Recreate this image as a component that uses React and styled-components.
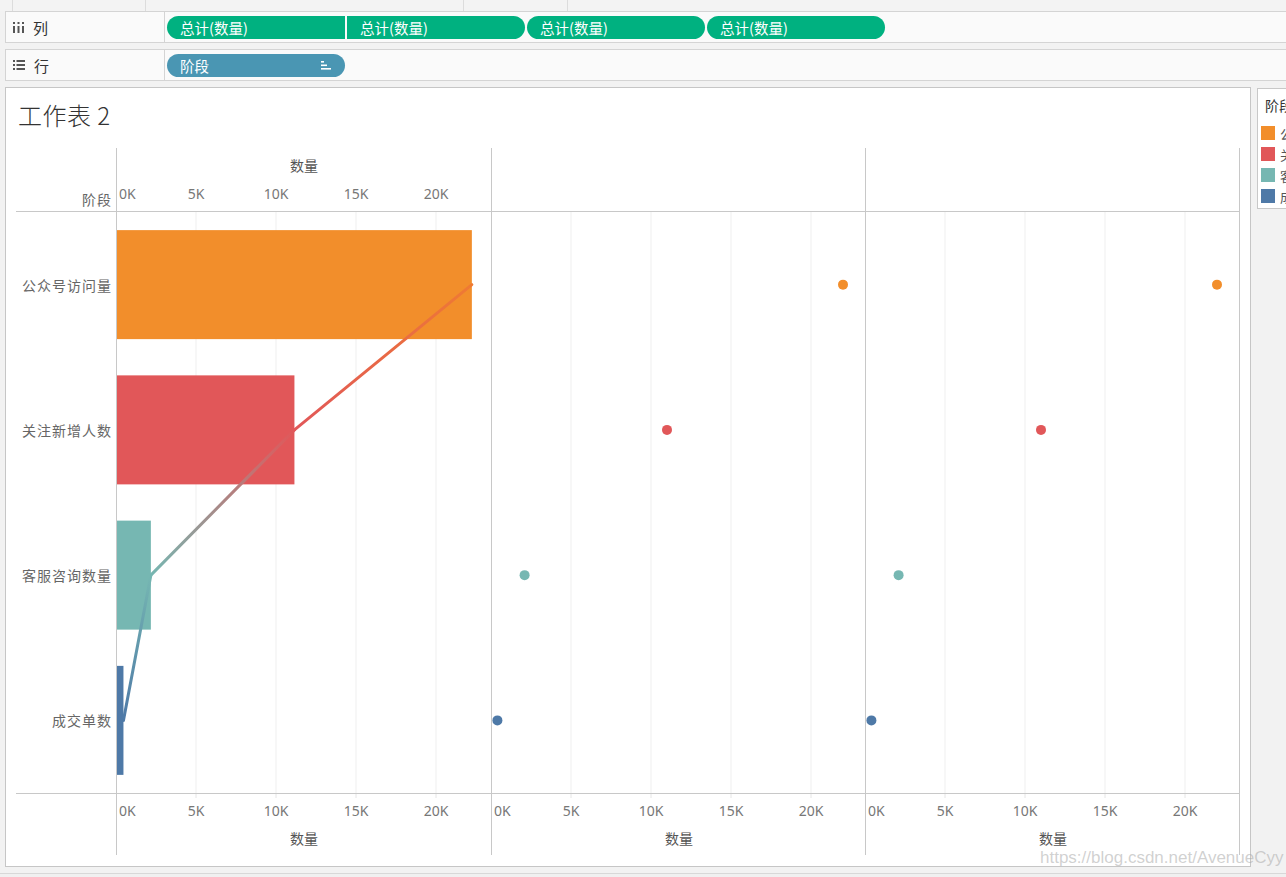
import React from "react";
import styled, { createGlobalStyle } from "styled-components";

const stages = [
  { name: "公众号访问量", value: 22000, color: "#f28e2b" },
  { name: "关注新增人数", value: 11000, color: "#e15759" },
  { name: "客服咨询数量", value: 2100, color: "#76b7b2" },
  { name: "成交单数", value: 400, color: "#4e79a7" },
];

const ticks = [0, 5000, 10000, 15000, 20000];
const BODY_H = 581;
const ROW_H = BODY_H / 4;
const BAR_H = 109;

// 16px per 1K, zero sits just under the pane border
const xOf = (v) => (v / 1000) * 16 - 1;
// bar pane draws a touch wider than the dot panes
const barX = (v) => (v / 1000) * 16.13;
const yOf = (i) => ROW_H * i + ROW_H / 2;
const tickLabel = (t) => `${t / 1000}K`;

const GlobalStyle = createGlobalStyle`
  html, body {
    margin: 0;
    padding: 0;
    background: #f2f2f2;
    overflow: hidden;
  }
  * {
    box-sizing: border-box;
  }
`;

const Page = styled.div`
  position: relative;
  width: 100vw;
  height: 100vh;
  overflow: hidden;
  font-family: "Noto Sans", "Noto Sans CJK SC", sans-serif;
  color: #333;
`;

const TopStrip = styled.div`
  display: flex;
  height: 11px;
  background: #f3f3f3;
`;

const StripCell = styled.div`
  width: ${(p) => p.$w}px;
  border-right: 1px solid #dcdcdc;
`;

const Shelves = styled.div`
  display: flex;
  flex-direction: column;
  gap: 6px;
  padding-left: 5px;
`;

const Shelf = styled.div`
  display: flex;
  align-items: center;
  height: 32px;
  background: #fafafa;
  border: 1px solid #d4d4d4;
  border-right: none;
`;

const ShelfLabel = styled.div`
  display: flex;
  align-items: center;
  gap: 9px;
  width: 159px;
  height: 100%;
  padding-left: 7px;
  border-right: 1px solid #d4d4d4;
  font-family: "Noto Sans CJK SC", sans-serif;
  font-size: 15px;
  color: #333;
`;

const Pills = styled.div`
  display: flex;
  gap: 2px;
  margin-left: 2px;
`;

const radii = {
  left: "12px 0 0 12px",
  right: "0 12px 12px 0",
  both: "12px",
};

const Pill = styled.div`
  display: flex;
  align-items: center;
  justify-content: space-between;
  width: 178px;
  height: 23px;
  padding: 0 14px 0 13px;
  border-radius: ${(p) => radii[p.$round]};
  background: ${(p) => p.$color};
  color: #fff;
  font-family: "Noto Sans CJK SC", sans-serif;
  font-size: 14.5px;
`;

const MainRow = styled.div`
  display: flex;
  align-items: flex-start;
  gap: 6px;
  padding-left: 5px;
  margin-top: 6px;
`;

const Sheet = styled.div`
  flex: none;
  width: 1246px;
  height: 780px;
  background: #fff;
  border: 1px solid #c6c6c6;
`;

const Title = styled.div`
  height: 60px;
  padding: 11px 0 0 12px;
  font-family: "Noto Sans CJK SC", sans-serif;
  font-size: 24px;
  line-height: 32px;
  font-weight: 300;
  letter-spacing: 0.5px;
  color: #333;
`;

const ChartGrid = styled.div`
  display: grid;
  grid-template-columns: 100px 375px 374px 375px;
  grid-template-rows: 63px 583px 61px;
  margin-left: 10px;
`;

const Corner = styled.div`
  display: flex;
  align-items: flex-end;
  justify-content: flex-end;
  padding: 0 4px 2px 0;
  font-family: "Noto Sans CJK SC", sans-serif;
  font-size: 14px;
  letter-spacing: 1px;
  color: #666;
`;

const PaneCell = styled.div`
  border-left: 1px solid #c8c8c8;
  border-right: ${(p) => (p.$last ? "1px solid #c8c8c8" : "none")};
  border-top: ${(p) => (p.$body ? "1px solid #c8c8c8" : "none")};
  border-bottom: ${(p) => (p.$body ? "1px solid #c8c8c8" : "none")};
  svg {
    display: block;
    width: 100%;
    height: 100%;
    overflow: visible;
  }
`;

const RowHeaders = styled.div`
  display: flex;
  flex-direction: column;
  border-top: 1px solid #c8c8c8;
  border-bottom: 1px solid #c8c8c8;
`;

const RowHeader = styled.div`
  flex: 1;
  display: flex;
  align-items: center;
  justify-content: flex-end;
  padding-right: 4px;
  font-family: "Noto Sans CJK SC", sans-serif;
  font-size: 14px;
  letter-spacing: 1px;
  color: #666;
`;

const Legend = styled.div`
  flex: none;
  width: 160px;
  height: 121px;
  margin-top: 1px;
  padding: 6px 0 0 3px;
  background: #fff;
  border: 1px solid #c8c8c8;
`;

const LegendTitle = styled.div`
  height: 20px;
  margin-left: 4px;
  font-family: "Noto Sans CJK SC", sans-serif;
  font-size: 14px;
  line-height: 20px;
  color: #333;
`;

const LegendList = styled.div`
  display: flex;
  flex-direction: column;
  gap: 7px;
  margin-top: 11px;
`;

const LegendItem = styled.div`
  display: flex;
  align-items: center;
  gap: 5px;
  height: 14px;
  font-family: "Noto Sans CJK SC", sans-serif;
  font-size: 13px;
  color: #555;
`;

const Swatch = styled.span`
  flex: none;
  width: 14px;
  height: 14px;
  background: ${(p) => p.$color};
`;

const StatusBar = styled.div`
  height: 20px;
  margin-top: 6px;
  border-top: 1px solid #d8d8d8;
  background: #f0f0f0;
`;

const Watermark = styled.div`
  position: absolute;
  left: 1040px;
  top: 848px;
  font-family: "Liberation Sans", Arial, sans-serif;
  font-size: 17px;
  color: rgba(170, 170, 170, 0.55);
  white-space: nowrap;
  pointer-events: none;
`;

const ColumnsIcon = () => (
  <svg width="11" height="11" viewBox="0 0 11 11">
    <g fill="#555">
      {[0, 4.5, 9].map((x) => (
        <g key={x}>
          <rect x={x} y="0" width="2" height="2" />
          <rect x={x} y="4" width="2" height="7" />
        </g>
      ))}
    </g>
  </svg>
);

const RowsIcon = () => (
  <svg width="12" height="10" viewBox="0 0 12 10">
    <g fill="#555">
      {[0, 4, 8].map((y) => (
        <g key={y}>
          <rect x="0" y={y} width="2" height="2" />
          <rect x="3.5" y={y} width="8.5" height="2" />
        </g>
      ))}
    </g>
  </svg>
);

const SortIcon = () => (
  <svg width="10" height="9" viewBox="0 0 10 9">
    <g fill="#fff">
      <rect x="0" y="0" width="3" height="1.6" />
      <rect x="0" y="3.5" width="6" height="1.6" />
      <rect x="0" y="7" width="10" height="1.6" />
    </g>
  </svg>
);

const Gridlines = () =>
  ticks.slice(1).map((t) => (
    <line key={t} x1={xOf(t)} x2={xOf(t)} y1="0" y2={BODY_H} stroke="#efefef" strokeWidth="1" />
  ));

const TopAxis = () => (
  <svg>
    <text x="187" y="23" textAnchor="middle" fontSize="14" fill="#555" fontFamily="Noto Sans CJK SC, sans-serif">
      数量
    </text>
    {ticks.map((t) => (
      <text
        key={t}
        x={t === 0 ? 2 : xOf(t)}
        y="51"
        textAnchor={t === 0 ? "start" : "middle"}
        fontSize="14"
        fill="#777"
        fontFamily="Noto Sans, sans-serif"
      >
        {tickLabel(t)}
      </text>
    ))}
  </svg>
);

const BottomAxis = () => (
  <svg>
    {ticks.slice(1).map((t) => (
      <line key={t} x1={xOf(t)} x2={xOf(t)} y1="0" y2="4" stroke="#e6e6e6" />
    ))}
    {ticks.map((t) => (
      <text
        key={t}
        x={t === 0 ? 2 : xOf(t)}
        y="22"
        textAnchor={t === 0 ? "start" : "middle"}
        fontSize="14"
        fill="#777"
        fontFamily="Noto Sans, sans-serif"
      >
        {tickLabel(t)}
      </text>
    ))}
    <text x="187" y="50" textAnchor="middle" fontSize="14" fill="#555" fontFamily="Noto Sans CJK SC, sans-serif">
      数量
    </text>
  </svg>
);

const BarPane = () => {
  const pts = stages.map((s, i) => [barX(s.value), yOf(i)]);
  return (
    <svg>
      <defs>
        {pts.slice(1).map((p, i) => (
          <linearGradient
            key={i}
            id={`seg${i}`}
            gradientUnits="userSpaceOnUse"
            x1={pts[i][0]}
            y1={pts[i][1]}
            x2={p[0]}
            y2={p[1]}
          >
            <stop offset="0" stopColor={i === 0 ? "#ef7a33" : stages[i].color} />
            <stop offset="1" stopColor={stages[i + 1].color} />
          </linearGradient>
        ))}
      </defs>
      <Gridlines />
      {stages.map((s, i) => (
        <rect key={s.name} x="0" y={yOf(i) - BAR_H / 2} width={barX(s.value)} height={BAR_H} fill={s.color} />
      ))}
      {pts.slice(1).map((p, i) => (
        <line
          key={i}
          x1={pts[i][0]}
          y1={pts[i][1]}
          x2={p[0]}
          y2={p[1]}
          stroke={`url(#seg${i})`}
          strokeWidth="3"
          strokeLinecap="round"
        />
      ))}
    </svg>
  );
};

const DotPane = () => (
  <svg>
    <Gridlines />
    {stages.map((s, i) => (
      <circle key={s.name} cx={xOf(s.value)} cy={yOf(i)} r="5" fill={s.color} />
    ))}
  </svg>
);

export default function App() {
  return (
    <Page>
      <GlobalStyle />
      <TopStrip>
        <StripCell $w={13} />
        <StripCell $w={133} />
        <StripCell $w={318} />
        <StripCell $w={104} />
      </TopStrip>

      <Shelves>
        <Shelf>
          <ShelfLabel>
            <ColumnsIcon />
            列
          </ShelfLabel>
          <Pills>
            <Pill $color="#00b180" $round="left">总计(数量)</Pill>
            <Pill $color="#00b180" $round="right">总计(数量)</Pill>
            <Pill $color="#00b180" $round="both">总计(数量)</Pill>
            <Pill $color="#00b180" $round="both">总计(数量)</Pill>
          </Pills>
        </Shelf>
        <Shelf>
          <ShelfLabel>
            <RowsIcon />
            行
          </ShelfLabel>
          <Pills>
            <Pill $color="#4a96b3" $round="both">
              阶段
              <SortIcon />
            </Pill>
          </Pills>
        </Shelf>
      </Shelves>

      <MainRow>
        <Sheet>
          <Title>工作表 2</Title>
          <ChartGrid>
            <Corner>阶段</Corner>
            <PaneCell>
              <TopAxis />
            </PaneCell>
            <PaneCell />
            <PaneCell $last />

            <RowHeaders>
              {stages.map((s) => (
                <RowHeader key={s.name}>{s.name}</RowHeader>
              ))}
            </RowHeaders>
            <PaneCell $body>
              <BarPane />
            </PaneCell>
            <PaneCell $body>
              <DotPane />
            </PaneCell>
            <PaneCell $body $last>
              <DotPane />
            </PaneCell>

            <div />
            <PaneCell>
              <BottomAxis />
            </PaneCell>
            <PaneCell>
              <BottomAxis />
            </PaneCell>
            <PaneCell $last>
              <BottomAxis />
            </PaneCell>
          </ChartGrid>
        </Sheet>

        <Legend>
          <LegendTitle>阶段</LegendTitle>
          <LegendList>
            {stages.map((s) => (
              <LegendItem key={s.name}>
                <Swatch $color={s.color} />
                {s.name}
              </LegendItem>
            ))}
          </LegendList>
        </Legend>
      </MainRow>

      <StatusBar />
      <Watermark>https://blog.csdn.net/AvenueCyy</Watermark>
    </Page>
  );
}
